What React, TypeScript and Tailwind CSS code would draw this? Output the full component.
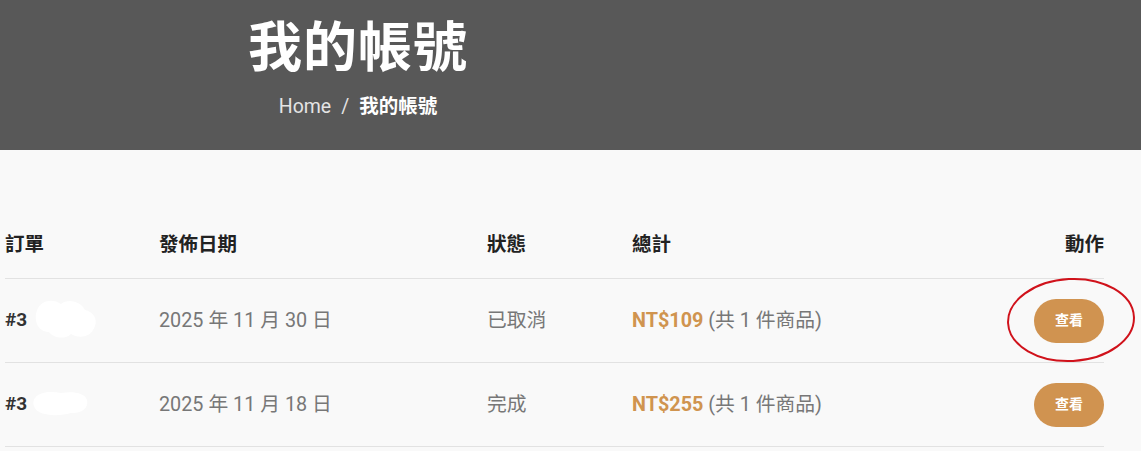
import React from "react";

const font = { fontFamily: "Roboto, 'Noto Sans CJK TC', sans-serif" };

type Row = { date: string; status: string; price: string; blob: "a" | "b" };

const rows: Row[] = [
  { date: "2025 年 11 月 30 日", status: "已取消", price: "NT$109", blob: "a" },
  { date: "2025 年 11 月 18 日", status: "完成", price: "NT$255", blob: "b" },
];

function Blob({ kind }: { kind: "a" | "b" }) {
  if (kind === "a") {
    return (
      <svg className="absolute left-[26px] top-[-10px]" width="70" height="46" viewBox="0 0 70 46">
        <path
          d="M6 14 C10 4 22 2 30 8 C38 2 50 6 54 14 C64 16 68 26 62 34 C58 42 46 42 40 38 C34 44 22 42 18 36 C8 36 2 26 6 14 Z"
          fill="#ffffff"
        />
      </svg>
    );
  }
  return (
    <svg className="absolute left-[26px] top-[0px]" width="60" height="28" viewBox="0 0 60 28">
      <path
        d="M4 8 C8 2 20 1 30 3 C42 1 54 3 56 10 C58 18 50 24 40 23 C30 26 16 26 8 22 C2 18 1 12 4 8 Z"
        fill="#ffffff"
      />
    </svg>
  );
}

export default function App() {
  return (
    <div className="min-h-[451px] bg-[#f9f9f9] relative overflow-hidden" style={font}>
      <header className="h-[150px] bg-[#585858] flex">
        <div className="w-[716px] flex flex-col items-center pt-[14px]">
          <h1 className="text-[54px] leading-[70px] font-bold text-white tracking-[1px]">我的帳號</h1>
          <div className="mt-[9px] flex items-center text-[19.5px] leading-[28px]">
            <span className="text-[#e4e4e4]">Home</span>
            <span className="text-[#e4e4e4] mx-[10px]">/</span>
            <span className="text-white font-bold">我的帳號</span>
          </div>
        </div>
      </header>

      <main className="pt-[60px] pl-[5px] w-[1104px]">
        <div className="grid grid-cols-[154px_328px_145px_1fr_auto] border-b border-[#e2e2e2] h-[69px] items-center text-[19.5px] font-bold text-[#222] pt-[2px]">
          <div>訂單</div>
          <div>發佈日期</div>
          <div>狀態</div>
          <div>總計</div>
          <div className="text-right">動作</div>
        </div>
        {rows.map((r) => (
          <div
            key={r.date}
            className="grid grid-cols-[154px_328px_145px_1fr_auto] border-b border-[#e2e2e2] h-[84px] items-center text-[19.8px] text-[#777]"
          >
            <div className="relative font-bold text-[#333] text-[19px]">
              <span>#3</span>
              <Blob kind={r.blob} />
            </div>
            <div>{r.date}</div>
            <div>{r.status}</div>
            <div>
              <span className="font-bold text-[#d0944f]">{r.price}</span>
              <span> (共 1 件商品)</span>
            </div>
            <div className="flex justify-end">
              <button className="w-[70px] h-[44px] rounded-full bg-[#d09350] text-white text-[14px] font-bold">
                查看
              </button>
            </div>
          </div>
        ))}
      </main>

      <svg className="absolute left-[1004px] top-[276px]" width="134" height="88" viewBox="0 0 134 88">
        <ellipse cx="67" cy="44" rx="63" ry="41" fill="none" stroke="#d0121b" strokeWidth="2" transform="rotate(-3 67 44)" />
      </svg>
    </div>
  );
}
